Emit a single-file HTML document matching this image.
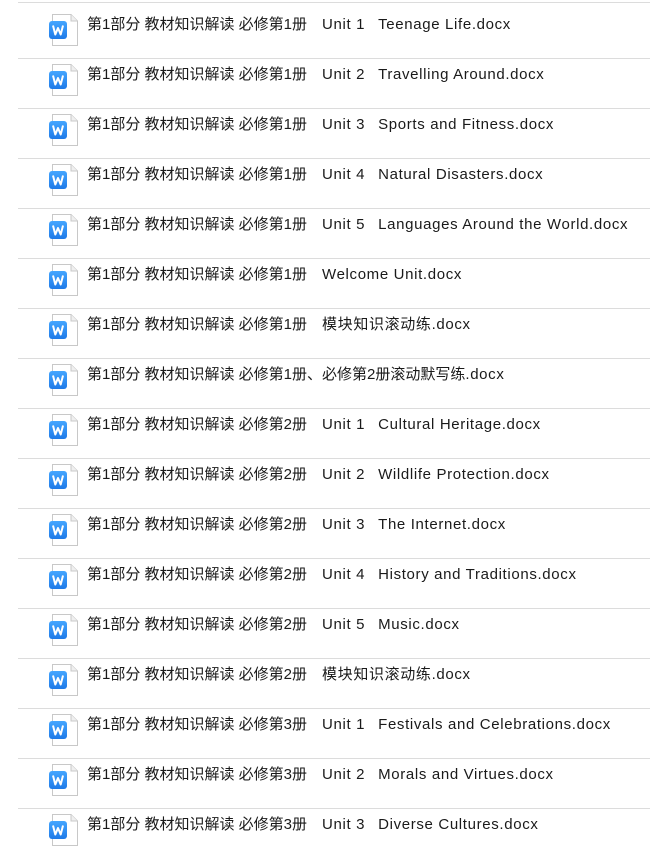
<!DOCTYPE html>
<html><head><meta charset="utf-8"><style>
body{margin:0;width:650px;height:844px;background:#fff;overflow:hidden;position:relative;font-family:"Liberation Sans","Noto Sans CJK SC",sans-serif;}
.l{position:absolute;left:18px;right:0;height:1px;background:#dcdcdc}
.t{position:absolute;left:87px;font-size:15px;color:#1a1a1a;white-space:pre;line-height:20px}
.e{letter-spacing:0.65px}
.g{display:inline-block;width:15px}
.g2{display:inline-block;width:13px}
.i{position:absolute;left:48px;width:32px;height:34px}
</style></head><body>
<div id="c"></div>
<script>
var rows=[];
function add(b,u,s){rows.push([b,u,s]);}
[["Unit 1","Teenage Life"],["Unit 2","Travelling Around"],["Unit 3","Sports and Fitness"],["Unit 4","Natural Disasters"],["Unit 5","Languages Around the World"],[null,"Welcome Unit"],[null,"模块知识滚动练"]].forEach(function(a){add("必修第1册",a[0],a[1])});
rows.push(["必修第1册、必修第2册滚动默写练",null,null]);
[["Unit 1","Cultural Heritage"],["Unit 2","Wildlife Protection"],["Unit 3","The Internet"],["Unit 4","History and Traditions"],["Unit 5","Music"],[null,"模块知识滚动练"]].forEach(function(a){add("必修第2册",a[0],a[1])});
[["Unit 1","Festivals and Celebrations"],["Unit 2","Morals and Virtues"],["Unit 3","Diverse Cultures"]].forEach(function(a){add("必修第3册",a[0],a[1])});
var h='<div class="l" style="top:2px"></div>';
for(var k=0;k<rows.length;k++){
 var r=rows[k],s='第1部分 教材知识解读 '+r[0];
 if(r[2]===null){s+='<span class="e">.docx</span>';}
 else{s+='<span class="g"></span>';
  if(r[1])s+='<span class="e">'+r[1]+'</span><span class="g2"></span>';
  s+='<span class="e">'+r[2]+'.docx</span>';}
 h+='<div class="t" style="top:'+(15+50*k)+'px">'+s+'</div>';
 h+='<svg class="i" style="top:'+(13+50*k)+'px" viewBox="0 0 32 34"><path d="M4.5 1.5H23L29.5 8V32.5H4.5Z" fill="#fff" stroke="#c8c8c8"/><path d="M23 1.5V8H29.5" fill="#f0f0f0" stroke="#c8c8c8"/><defs><linearGradient id="g" x1="0" y1="0" x2="0" y2="1"><stop offset="0" stop-color="#45a6ff"/><stop offset="1" stop-color="#1f7ae8"/></linearGradient></defs><rect x="1" y="8" width="18" height="18" rx="3" fill="url(#g)"/><path d="M5 12.5L7.3 21.5L10 15L12.7 21.5L15 12.5" fill="none" stroke="#fff" stroke-width="2" stroke-linejoin="round"/></svg>';
 if(k<rows.length-1)h+='<div class="l" style="top:'+(58+50*k)+'px"></div>';
}
document.getElementById("c").innerHTML=h;
</script>
</body></html>
